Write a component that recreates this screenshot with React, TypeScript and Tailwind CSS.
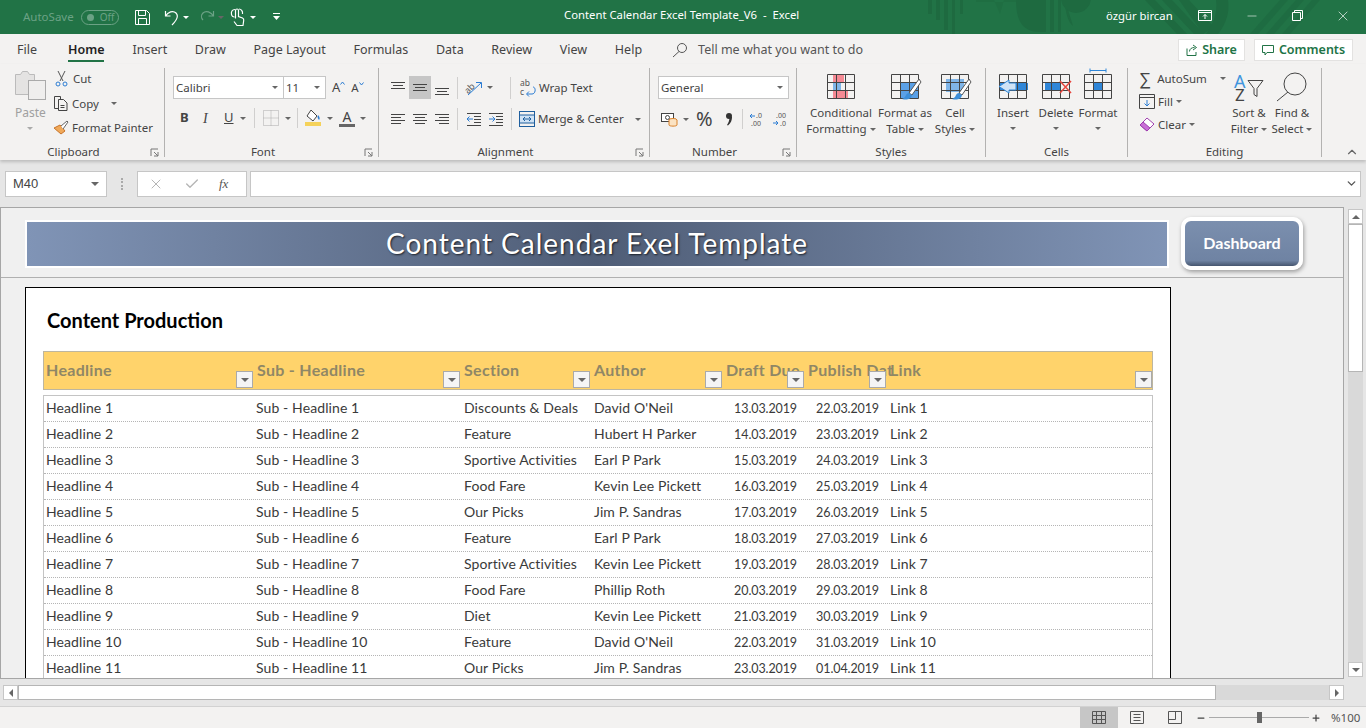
import type { ReactNode } from "react";
import { ChevronDown, ChevronUp, X, Check, Minus, Plus } from "lucide-react";

const rows = [
  ["Headline 1", "Sub - Headline 1", "Discounts & Deals", "David O'Neil", "13.03.2019", "22.03.2019", "Link 1"],
  ["Headline 2", "Sub - Headline 2", "Feature", "Hubert H Parker", "14.03.2019", "23.03.2019", "Link 2"],
  ["Headline 3", "Sub - Headline 3", "Sportive Activities", "Earl P Park", "15.03.2019", "24.03.2019", "Link 3"],
  ["Headline 4", "Sub - Headline 4", "Food Fare", "Kevin Lee Pickett", "16.03.2019", "25.03.2019", "Link 4"],
  ["Headline 5", "Sub - Headline 5", "Our Picks", "Jim P. Sandras", "17.03.2019", "26.03.2019", "Link 5"],
  ["Headline 6", "Sub - Headline 6", "Feature", "Earl P Park", "18.03.2019", "27.03.2019", "Link 6"],
  ["Headline 7", "Sub - Headline 7", "Sportive Activities", "Kevin Lee Pickett", "19.03.2019", "28.03.2019", "Link 7"],
  ["Headline 8", "Sub - Headline 8", "Food Fare", "Phillip Roth", "20.03.2019", "29.03.2019", "Link 8"],
  ["Headline 9", "Sub - Headline 9", "Diet", "Kevin Lee Pickett", "21.03.2019", "30.03.2019", "Link 9"],
  ["Headline 10", "Sub - Headline 10", "Feature", "David O'Neil", "22.03.2019", "31.03.2019", "Link 10"],
  ["Headline 11", "Sub - Headline 11", "Our Picks", "Jim P. Sandras", "23.03.2019", "01.04.2019", "Link 11"],
];

const tabs = ["Insert", "Draw", "Page Layout", "Formulas", "Data", "Review", "View", "Help"];
const sheetCols = "grid grid-cols-[211px_207px_130px_132px_82px_82px_1fr]";

function Caret({ className = "" }: { className?: string }) {
  return <span className={`inline-block w-0 h-0 border-x-[3px] border-x-transparent border-t-[3px] border-t-[#666] ${className}`} />;
}

function Sep({ className = "h-[24px]" }: { className?: string }) {
  return <span className={`w-px bg-[#d0cfce] ${className}`} />;
}

function Group({ width, label, launcher, children }: { width: string; label: string; launcher?: boolean; children: ReactNode }) {
  return (
    <div className={`${width} shrink-0 flex flex-col border-r border-[#b3b2b1] my-[4px] h-[89px]`}>
      <div className="flex-1 relative flex">{children}</div>
      <div className={`h-[10px] relative text-center text-[11.5px] leading-[10px] text-[#444] ${launcher ? "pr-[17px]" : ""}`}>
        {label}
        {launcher && (
          <svg className="absolute right-[5px] top-[1px]" width="9" height="9" viewBox="0 0 9 9" fill="none" stroke="#777">
            <path d="M1 8V1h7M8 8H4M8 8V4M8 8L4 4" />
          </svg>
        )}
      </div>
    </div>
  );
}

// align-lines icon: each line is [x1, x2, y]
function Lines({ lines, arrow }: { lines: number[][]; arrow?: ReactNode }) {
  return (
    <svg width="16" height="16" viewBox="0 0 16 16" fill="none" stroke="#444">
      {lines.map((l, i) => (
        <path key={i} d={`M${l[0]} ${l[2]}.5H${l[1]}`} />
      ))}
      {arrow}
    </svg>
  );
}

function GridIcon({ fill, children }: { fill?: ReactNode; children?: ReactNode }) {
  return (
    <svg className="overflow-visible" width="30" height="32" viewBox="0 0 30 32" fill="none">
      {fill}
      <path d="M1.500 6.500h27v24h-27zM1.500 14.500h27M1.500 22.500h27M10.500 6.500v24M19.500 6.500v24" stroke="#444" />
      {children}
    </svg>
  );
}

const Brush = () => (
  <g>
    <path d="M29 11L19 25l3 2L31 14z" fill="#fff" stroke="#555" />
    <path d="M19 25c-3 0-3 3-4 4-1 1-3 2-3 2 4 1 9 1 10-4z" fill="#3d8ed8" />
  </g>
);

function BigBtn({ icon, lines, className = "" }: { icon: ReactNode; lines: ReactNode[]; className?: string }) {
  return (
    <div className={`flex flex-col items-center shrink-0 text-[11.5px] leading-[16px] text-[#444] ${className}`}>
      <div className="h-[37px] flex items-start">{icon}</div>
      {lines.map((l, i) => (
        <div key={i} className="whitespace-nowrap flex items-center gap-[3px]">{l}</div>
      ))}
    </div>
  );
}

function FilterBtn({ className }: { className: string }) {
  return (
    <span className={`absolute bottom-[1px] z-10 w-[17px] h-[17px] bg-[#f5f5f5] border border-[#aaa] flex items-center justify-center ${className}`}>
      <Caret className="border-x-[4px] border-t-[4px]" />
    </span>
  );
}

function TitleBar() {
  return (
    <div className="relative h-[34px] bg-[#217346] flex items-center text-white overflow-hidden shrink-0">
      <svg className="absolute left-[900px] top-0" width="466" height="34" viewBox="0 0 466 34" fill="#1e6a40">
        <path d="M28 0h4v14h-4zM36 0h4v20h-4zM44 0h4v30h-4zM52 0h3v34h-3zM60 0h3v14h-3z" />
        <path d="M94 0l6 14 4-14zM76 0h40v2H76z" opacity=".6" />
        <path d="M116 0c0 20 6 32 24 32h6V0z" />
        <path d="M150 0h4v32h-4zM158 0h3v32h-3zM165 0c0 12 3 22 8 26z" />
        <circle cx="176" cy="-2" r="15" />
        <path d="M245 0h10l32 34h-10zM262 0h10l32 34h-10zM279 0h10l24 26c-3 3-6 6-10 8z" />
        <path d="M316 0h12c2 12-2 24-10 34h-12c7-9 12-22 10-34z" />
        <path d="M380 0h8l-30 34h-8zM396 0h8l-30 34h-8zM412 0h8l-30 34h-8z" opacity=".7" />
      </svg>
      <span className="relative ml-[23px] text-[11.5px] text-[#6ba285]">AutoSave</span>
      <span className="relative ml-[7px] w-[38px] h-[15px] rounded-full border border-[#6ba285] flex items-center pl-[5px] gap-[6px]">
        <span className="w-[7px] h-[7px] rounded-full bg-[#6ba285]" />
        <span className="text-[10px] leading-none text-[#6ba285]">Off</span>
      </span>
      <svg className="relative ml-[15px]" width="17" height="17" viewBox="0 0 17 17" fill="none" stroke="#fff">
        <path d="M1.500 1.500h11l3 3v11h-14zM4.500 1.500v5h7v-5M4.500 15.500v-6h8v6" />
      </svg>
      <svg className="relative ml-[13px]" width="16" height="17" viewBox="0 0 16 17" fill="none" stroke="#fff" strokeWidth="1.2">
        <path d="M1.500 2v5h5M1.500 7C4 3 9 1 12 4c3 3 1 7-4 12" />
      </svg>
      <Caret className="relative ml-[3px] border-t-white" />
      <svg className="relative ml-[10px]" width="16" height="17" viewBox="0 0 16 17" fill="none" stroke="#6ba285" strokeWidth="1.2">
        <path d="M14.500 2v5h-5M14.500 7C12 3 7 1 4 4 2 6 2 9 4 11" />
      </svg>
      <Caret className="relative ml-[3px] border-t-[#6ba285]" />
      <svg className="relative ml-[6px]" width="15" height="20" viewBox="0 0 15 20" fill="none" stroke="#fff" strokeWidth="1.2">
        <path d="M5.500 11.500v-8a1.500 1.500 0 013 0v6l4 1.500c1 .5 1.500 1 1.200 2.500L13 18.500H7L4 14.500M5 2.500C2 2.500 1 5 1.500 7.500c.3 1.500 1.500 2.500 3 2.500M9 2c2 0 4 2 3.500 5" />
      </svg>
      <Caret className="relative ml-[5px] border-t-white" />
      <svg className="relative ml-[17px]" width="7" height="8" viewBox="0 0 7 8" fill="#fff">
        <path d="M0 0h7v1H0zM0 3h7L3.500 7z" />
      </svg>
      <span className="absolute left-[564px] top-[7px] text-[11.3px] leading-[16px] whitespace-pre">Content Calendar Excel Template_V6  -  Excel</span>
      <span className="absolute left-[1106px] top-[8px] text-[11.3px] leading-[16px]">özgür bircan</span>
      <svg className="absolute left-[1198px] top-[10px]" width="14" height="12" viewBox="0 0 14 12" fill="none" stroke="#fff">
        <path d="M.5 .5h13v10H.5zM.5 2.500h13M7 9V4.500M5 6.500l2-2 2 2" />
      </svg>
      <Minus className="absolute left-[1245px] top-[9px]" size={14} strokeWidth={1} />
      <svg className="absolute left-[1292px] top-[10px]" width="11" height="11" viewBox="0 0 11 11" fill="none" stroke="#fff">
        <path d="M.5 2.500h8v8h-8zM2.500 2.500v-2h8v8h-2" />
      </svg>
      <X className="absolute left-[1335px] top-[8px]" size={16} strokeWidth={1} />
    </div>
  );
}

function TabRow() {
  return (
    <div className="h-[30px] flex items-center bg-[#f3f2f1] shrink-0 text-[12.5px] text-[#444] pl-[17px] pt-[2px]">
      <span className="mr-[31px]">File</span>
      <span className="relative font-semibold text-[#1f1f1f] mr-[28px] leading-[30px]">
        Home
        <span className="absolute left-0 right-0 bottom-[3px] h-[2px] bg-[#217346]" />
      </span>
      <div className="flex gap-[27.7px]">
        {tabs.map((t) => (
          <span key={t}>{t}</span>
        ))}
      </div>
      <svg className="ml-[30px]" width="16" height="16" viewBox="0 0 16 16" fill="none" stroke="#555">
        <circle cx="10" cy="6" r="4.500" />
        <path d="M7 9.500L1 15" />
      </svg>
      <span className="ml-[10px] text-[#555]">Tell me what you want to do</span>
      <div className="ml-auto mr-[13px] flex gap-[9px] text-[#217346] font-semibold">
        <span className="w-[67px] h-[22px] bg-white border border-[#e3e2e1] flex items-center justify-center gap-[4px]">
          <svg width="12" height="12" viewBox="0 0 12 12" fill="none" stroke="#217346"><path d="M1 4.500v7h9V8M3.500 7.500c0-2.500 2-4 5-4M7 1l3.500 2.500L7 6" /></svg>
          Share
        </span>
        <span className="w-[99px] h-[22px] bg-white border border-[#e3e2e1] flex items-center justify-center gap-[5px]">
          <svg width="12" height="12" viewBox="0 0 12 12" fill="none" stroke="#217346"><path d="M.5 1.500h11v7H5L3 11V8.500H.5z" /></svg>
          Comments
        </span>
      </div>
    </div>
  );
}

function Clipboard() {
  return (
    <Group width="w-[165px]" label="Clipboard" launcher>
      <div className="w-[54px] pl-[15px] pt-[1px] flex flex-col items-start text-[#a0a0a0] text-[12px] leading-[14px]">
        <svg width="31" height="32" viewBox="0 0 31 32" fill="none">
          <path d="M.5 5.500h5l2-3h5l2 3h5v20H.5z" fill="#e4e3e2" stroke="#bbb" />
          <rect x="13.500" y="11.500" width="17" height="19" fill="#efeeed" stroke="#aaa" />
        </svg>
        <span className="mt-[5px]">Paste</span>
        <Caret className="ml-[12px] mt-[7px] border-t-[#aaa]" />
      </div>
      <div className="flex flex-col text-[11.5px] text-[#444] pt-[2px] gap-[7.5px] leading-[17px]">
        <div className="flex items-center gap-[5px] pl-[1px]">
          <svg width="13" height="16" viewBox="0 0 13 16" fill="none" stroke="#555">
            <path d="M3 0l5 10M10 0L5 10" />
            <circle cx="3" cy="13" r="2" stroke="#2b7cd3" />
            <circle cx="10" cy="13" r="2" stroke="#2b7cd3" />
          </svg>
          <span>Cut</span>
        </div>
        <div className="flex items-center gap-[4px]">
          <svg width="14" height="15" viewBox="0 0 14 15" fill="none" stroke="#444">
            <path d="M4 12.500H.5v-12h6v3M4.500 3.500h5l3.500 3.500v7.500H4.500zM6.500 9.500h4M6.500 11.500h4" />
          </svg>
          <span>Copy</span>
          <Caret className="ml-[8px]" />
        </div>
        <div className="flex items-center gap-[3px] -ml-[1px]">
          <svg width="16" height="15" viewBox="0 0 16 15" fill="none">
            <path d="M1 8l6-3 5 6-4 3z" fill="#f0a95a" stroke="#c8742a" />
            <path d="M8 6l6-5 1 1-5 7" fill="#fff" stroke="#666" />
          </svg>
          <span>Format Painter</span>
        </div>
      </div>
    </Group>
  );
}

function SelectBox({ className, text }: { className: string; text: string }) {
  return (
    <div className={`h-[23px] bg-white border border-[#c6c6c6] flex items-center justify-between pl-[2px] pr-[5px] text-[11.5px] text-[#444] ${className}`}>
      <span>{text}</span>
      <Caret />
    </div>
  );
}

function Font() {
  return (
    <Group width="w-[214px]" label="Font" launcher>
      <div className="flex flex-col pl-[8px] pt-[8px]">
        <div className="flex items-center">
          <SelectBox className="w-[111px]" text="Calibri" />
          <SelectBox className="w-[43px] -ml-px" text="11" />
          <span className="ml-[6px] flex items-start text-[#444]">
            <span className="text-[13px] leading-none">A</span>
            <svg width="5" height="4" viewBox="0 0 5 4" fill="none" stroke="#2b7cd3"><path d="M.5 3.500l2-2.500 2 2.500" /></svg>
          </span>
          <span className="ml-[6px] flex items-start text-[#444]">
            <span className="text-[11.5px] leading-none">A</span>
            <svg width="5" height="4" viewBox="0 0 5 4" fill="none" stroke="#2b7cd3"><path d="M.5 .5l2 2.500 2-2.500" /></svg>
          </span>
        </div>
        <div className="flex items-center mt-[7px] h-[24px] text-[#444]">
          <span className="ml-[7px] w-[22px] font-bold text-[13px]">B</span>
          <span className="w-[22px] italic text-[14px] pl-[1px] font-['Liberation_Serif',serif]">I</span>
          <span className="w-[16px] underline text-[13px]">U</span>
          <Caret />
          <Sep className="ml-[8px] h-[20px]" />
          <svg className="ml-[8px]" width="16" height="16" viewBox="0 0 16 16" fill="none" stroke="#aaa" strokeDasharray="1 1">
            <path d="M.5 .5h15v15H.5zM8 .5v15M.5 8h15" />
          </svg>
          <Caret className="ml-[6px]" />
          <Sep className="ml-[6px] h-[20px]" />
          <svg className="ml-[7px]" width="17" height="18" viewBox="0 0 17 18" fill="none">
            <path d="M6 1l6 6-4 5-6-5z" stroke="#444" fill="#fff" />
            <path d="M13 6c2 2 2 4 1 5-1-1-2-3-1-5z" fill="#2b7cd3" />
            <rect x="0" y="13" width="16" height="4" fill="#f5d25a" />
          </svg>
          <Caret className="ml-[5px]" />
          <span className="ml-[6px] w-[16px] flex flex-col items-center text-[14px] leading-[14px]">
            A
            <span className="w-[16px] h-[3px] bg-[#666]" />
          </span>
          <Caret className="ml-[5px]" />
        </div>
      </div>
    </Group>
  );
}

function Alignment() {
  return (
    <Group width="w-[271px]" label="Alignment" launcher>
      <div className="flex flex-col pl-[11px] pt-[8px]">
        <div className="flex items-center h-[23px]">
          <Lines lines={[[1, 15, 2], [3, 13, 5], [1, 15, 8]]} />
          <span className="ml-[3px] w-[22px] h-[23px] bg-[#c6c6c6] flex items-center justify-center">
            <Lines lines={[[1, 15, 4], [3, 13, 7], [1, 15, 10]]} />
          </span>
          <span className="ml-[3px]"><Lines lines={[[1, 15, 8], [3, 13, 11], [1, 15, 14]]} /></span>
          <Sep className="ml-[7px] h-[22px]" />
          <svg className="ml-[7px] overflow-visible" width="18" height="18" viewBox="0 0 18 18" fill="none">
            <text x="-1" y="12" fontSize="9" fill="#555" transform="rotate(-45 5 9)" fontFamily="Noto Sans">ab</text>
            <path d="M3 16L16 4M11 3.500h5.500V9" stroke="#2b7cd3" />
          </svg>
          <Caret className="ml-[4px]" />
          <Sep className="ml-[17px] h-[22px]" />
          <div className="ml-[9px] flex items-center gap-[2px] text-[11.5px] text-[#444]">
            <svg className="overflow-visible" width="17" height="18" viewBox="0 0 17 18" fill="none">
              <text x="0" y="7" fontSize="8.500" fill="#555" fontFamily="Noto Sans">ab</text>
              <text x="0" y="16" fontSize="8.500" fill="#555" fontFamily="Noto Sans">c</text>
              <path d="M13 8c3 0 3 7-1 7H7M9 12.500L6.500 15 9 17.500" stroke="#2b7cd3" />
            </svg>
            <span>Wrap Text</span>
          </div>
        </div>
        <div className="flex items-center h-[24px] mt-[8px]">
          <Lines lines={[[1, 15, 3], [1, 11, 6], [1, 15, 9], [1, 11, 12]]} />
          <span className="ml-[6px]"><Lines lines={[[1, 15, 3], [3, 13, 6], [1, 15, 9], [3, 13, 12]]} /></span>
          <span className="ml-[6px]"><Lines lines={[[1, 15, 3], [5, 15, 6], [1, 15, 9], [5, 15, 12]]} /></span>
          <Sep className="ml-[7px] h-[22px]" />
          <span className="ml-[8px]">
            <Lines lines={[[1, 15, 2], [8, 15, 5], [8, 15, 8], [8, 15, 11], [1, 15, 14]]} arrow={<path d="M7 8H1M3.500 5.500L1 8l2.500 2.500" stroke="#2b7cd3" />} />
          </span>
          <span className="ml-[6px]">
            <Lines lines={[[1, 15, 2], [8, 15, 5], [8, 15, 8], [8, 15, 11], [1, 15, 14]]} arrow={<path d="M1 8h6M4.500 5.500L7 8l-2.500 2.500" stroke="#2b7cd3" />} />
          </span>
          <Sep className="ml-[7px] h-[22px]" />
          <div className="ml-[7px] flex items-center gap-[3px] text-[11.5px] text-[#444]">
            <svg width="16" height="16" viewBox="0 0 16 16" fill="none">
              <rect x=".5" y=".5" width="15" height="15" stroke="#1f5f9e" />
              <rect x="1" y="4" width="14" height="8" fill="#cfe3f6" />
              <path d="M.5 4h15M.5 12h15M4 8h8M6 6L4 8l2 2M10 6l2 2-2 2" stroke="#1f5f9e" />
            </svg>
            <span>Merge &amp; Center</span>
            <Caret className="ml-[8px]" />
          </div>
        </div>
      </div>
    </Group>
  );
}

function NumberGroup() {
  return (
    <Group width="w-[147px]" label="Number" launcher>
      <div className="flex flex-col pl-[8px] pt-[8px]">
        <SelectBox className="w-[131px]" text="General" />
        <div className="flex items-center h-[24px] mt-[8px]">
          <svg className="ml-[3px]" width="17" height="16" viewBox="0 0 17 16" fill="none">
            <rect x=".5" y="2.500" width="12" height="8" fill="#fff" stroke="#444" />
            <circle cx="6.500" cy="6.500" r="2" stroke="#444" />
            <ellipse cx="12" cy="9" rx="4" ry="1.500" fill="#fbe3c3" stroke="#d9822b" />
            <path d="M8 9v5c0 1.500 8 1.500 8 0V9" fill="#fbe3c3" stroke="#d9822b" />
          </svg>
          <Caret className="ml-[5px]" />
          <span className="ml-[7px] text-[20px] leading-none text-[#444]">%</span>
          <svg className="ml-[13px]" width="6" height="13" viewBox="0 0 6 13" fill="#333">
            <circle cx="3" cy="3" r="3" />
            <path d="M3.500 4h2.500c0 3-1 6-4 8.500L1 12c1.500-2 2.500-5 2.500-8z" />
          </svg>
          <Sep className="ml-[10px] h-[20px]" />
          <svg className="ml-[6px]" width="15" height="16" viewBox="0 0 15 16" fill="none">
            <path d="M6 5H1M3 3L1 5l2 2" stroke="#2b7cd3" />
            <text x="7" y="7" fontSize="7" fill="#555" fontFamily="Noto Sans">.0</text>
            <text x="2" y="15" fontSize="7" fill="#555" fontFamily="Noto Sans">.00</text>
          </svg>
          <svg className="ml-[8px]" width="15" height="16" viewBox="0 0 15 16" fill="none">
            <text x="4" y="7" fontSize="7" fill="#555" fontFamily="Noto Sans">.00</text>
            <path d="M1 12h5M4 10l2 2-2 2" stroke="#2b7cd3" />
            <text x="8" y="15" fontSize="7" fill="#555" fontFamily="Noto Sans">.0</text>
          </svg>
        </div>
      </div>
    </Group>
  );
}

function Styles() {
  return (
    <Group width="w-[189px]" label="Styles">
      <div className="flex pl-[9px]">
        <BigBtn
          className="w-[70px]"
          icon={
            <GridIcon
              fill={
                <>
                  <rect x="7" y="7" width="11" height="8" fill="#f58a94" />
                  <rect x="7" y="15" width="8" height="8" fill="#7fb5e8" />
                  <rect x="7" y="23" width="15" height="7" fill="#f58a94" />
                </>
              }
            />
          }
          lines={["Conditional", <>Formatting<Caret /></>]}
        />
        <BigBtn
          className="w-[58px]"
          icon={<GridIcon fill={<rect x="10" y="14" width="18" height="16" fill="#5aa0e6" />}><Brush /></GridIcon>}
          lines={["Format as", <>Table<Caret /></>]}
        />
        <BigBtn
          className="w-[42px]"
          icon={<GridIcon fill={<rect x="6" y="11" width="18" height="13" fill="#7fb5e8" />}><Brush /></GridIcon>}
          lines={["Cell", <>Styles<Caret /></>]}
        />
      </div>
    </Group>
  );
}

function Cells() {
  return (
    <Group width="w-[142px]" label="Cells">
      <div className="flex pl-[12px]">
        <BigBtn
          className="w-[30px]"
          icon={
            <GridIcon fill={<rect x="2" y="15" width="28" height="7" fill="#2f86d8" />}>
              <path d="M11 12l-10 6.500 10 6.500v-3h7v-7h-7z" fill="#cfe3f6" stroke="#2f86d8" />
            </GridIcon>
          }
          lines={["Insert", <Caret className="mt-[6px]" />]}
        />
        <BigBtn
          className="w-[30px] ml-[13px]"
          icon={
            <GridIcon fill={<rect x="4" y="15" width="16" height="7" fill="#2f86d8" />}>
              <path d="M19 13l11 12M30 13L19 25" stroke="#e8473f" strokeWidth="1.500" />
            </GridIcon>
          }
          lines={["Delete", <Caret className="mt-[6px]" />]}
        />
        <BigBtn
          className="w-[30px] ml-[12px]"
          icon={
            <GridIcon fill={<rect x="10" y="15" width="10" height="7" fill="#2f86d8" />}>
              <path d="M7 2.500h16M7 .5v4M23 .5v4" stroke="#2f86d8" />
            </GridIcon>
          }
          lines={["Format", <Caret className="mt-[6px]" />]}
        />
      </div>
    </Group>
  );
}

function Editing() {
  return (
    <Group width="w-[194px]" label="Editing">
      <div className="flex flex-col pl-[11px] pt-[2px] text-[11.5px] leading-[17px] text-[#444] w-[97px] shrink-0 gap-[6px]">
        <div className="flex items-center gap-[6px]">
          <span className="w-[15px] text-[17px] leading-none font-light">∑</span>
          <span>AutoSum</span>
          <Caret className="ml-[7px]" />
        </div>
        <div className="flex items-center gap-[3px]">
          <svg width="16" height="15" viewBox="0 0 16 15" fill="none">
            <path d="M.5 .5h15v14H.5zM.5 3.500h15" stroke="#444" />
            <path d="M8 6v6M5.500 9.500L8 12l2.500-2.500" stroke="#2b7cd3" />
          </svg>
          <span>Fill</span>
          <Caret />
        </div>
        <div className="flex items-center gap-[3px]">
          <svg width="16" height="15" viewBox="0 0 16 15" fill="none">
            <path d="M1 8l7-7 7 6-7 7z" fill="#fff" stroke="#a03fb0" />
            <path d="M1 8l3-3 7 6-3 3z" fill="#c86fd6" stroke="#a03fb0" />
          </svg>
          <span>Clear</span>
          <Caret />
        </div>
      </div>
      <BigBtn
        className="w-[48px]"
        icon={
          <svg width="32" height="34" viewBox="0 0 32 34" fill="none">
            <text x="1" y="20" fontSize="18" fill="#3f95dd" fontFamily="Noto Sans">A</text>
            <text x="2" y="33" fontSize="17" fill="#444" fontFamily="Noto Sans">Z</text>
            <path d="M15 12.500h15l-6 8v8l-3-2v-6z" stroke="#444" />
          </svg>
        }
        lines={["Sort &", <>Filter<Caret /></>]}
      />
      <BigBtn
        className="w-[38px]"
        icon={
          <svg width="32" height="34" viewBox="0 0 32 34" fill="none" stroke="#444">
            <circle cx="19" cy="16" r="11" />
            <path d="M12 24L1 33" />
          </svg>
        }
        lines={["Find &", <>Select<Caret /></>]}
      />
    </Group>
  );
}

function Ribbon() {
  return (
    <div className="relative z-10 h-[96px] flex bg-[#f3f2f1] shrink-0 shadow-[0_2px_3px_rgba(0,0,0,0.18)]">
      <Clipboard />
      <Font />
      <Alignment />
      <NumberGroup />
      <Styles />
      <Cells />
      <Editing />
      <ChevronUp className="absolute left-[1345px] top-[81px] text-[#666]" size={14} strokeWidth={2} />
    </div>
  );
}

function FormulaBar() {
  return (
    <div className="h-[47px] bg-[#e6e6e6] flex items-center pl-[5px] pr-[5px] shrink-0">
      <div className="w-[102px] h-[26px] bg-white border border-[#c6c6c6] flex items-center justify-between pl-[7px] pr-[7px] text-[13px] text-[#444] font-['Liberation_Sans',sans-serif]">
        M40
        <Caret className="border-x-[4px] border-t-[4px]" />
      </div>
      <span className="ml-[14px] w-[2px] h-[12px] border-l-2 border-dotted border-[#aaa]" />
      <div className="ml-[14px] w-[110px] h-[26px] bg-white border border-[#c6c6c6] flex items-center text-[#b5b5b5]">
        <X className="ml-[10px]" size={16} strokeWidth={1.5} />
        <Check className="ml-[20px]" size={16} strokeWidth={2} />
        <span className="ml-[19px] italic text-[#555] text-[13px] font-['Liberation_Serif',serif]">fx</span>
      </div>
      <div className="ml-[3px] flex-1 h-[26px] bg-white border border-[#c6c6c6] flex items-center justify-end pr-[2px]">
        <ChevronDown className="text-[#555]" size={13} strokeWidth={2.5} />
      </div>
    </div>
  );
}

function Sheet() {
  return (
    <div className="w-[1344px] h-[472px] overflow-hidden bg-[#f0f0f0] border border-[#a6a6a6] font-['Lato',sans-serif]">
      <div className="h-[70px] border-b border-[#b0b0b0] flex items-start">
        <div className="ml-[24px] mt-[12px] w-[1144px] h-[48px] border-2 border-white bg-[linear-gradient(90deg,#8094b6_0%,#4f5d76_50%,#8094b6_100%)] text-center text-white text-[28px] leading-[42px] tracking-[1px] [text-shadow:1px_1px_2px_rgba(0,0,0,0.7)]">
          Content Calendar Exel Template
        </div>
        <div className="ml-[12px] mt-[9px] w-[122px] h-[53px] rounded-[10px] border-[4px] border-white bg-[linear-gradient(180deg,#7b8fae_0%,#6f83a3_88%,#46566f_100%)] shadow-[1px_2px_4px_rgba(0,0,0,0.35)] text-center text-white font-bold text-[16px] leading-[44px]">
          Dashboard
        </div>
      </div>
      <div className="ml-[24px] mt-[9px] w-[1146px] border border-black bg-white pl-[17px] pr-[17px] pt-[18px] h-[500px]">
        <div className="text-[20px] leading-[28px] font-bold text-black pl-[4px]">Content Production</div>
        <div className={`${sheetCols} mt-[17px] h-[39px] bg-[#ffd36b] border border-[#bdb6a0] text-[16px] font-bold text-[#8f8766] tracking-[0.3px]`}>
          {["Headline", "Sub - Headline", "Section", "Author", "Draft Due", "Publish Dat", "Link"].map((h) => (
            <div key={h} className="relative pl-[2px] leading-[35px] whitespace-nowrap overflow-visible">
              {h}
              <FilterBtn className={h === "Link" ? "right-0" : "right-[2px]"} />
            </div>
          ))}
        </div>
        <div className="mt-[5px] border border-[#c4c4c4] text-[14px] text-[#3a3a3a] tracking-[0.1px]">
          {rows.map((r) => (
            <div key={r[0]} className={`${sheetCols} h-[26px] leading-[24px] border-b border-dotted border-[#b5b5b5]`}>
              <div className="pl-[2px]">{r[0]}</div>
              <div className="pl-[1px]">{r[1]}</div>
              <div className="pl-[2px]">{r[2]}</div>
              <div className="pl-[2px]">{r[3]}</div>
              <div className="text-right pr-[9px] text-[12.5px] tracking-[-0.1px] leading-[26px]">{r[4]}</div>
              <div className="text-right pr-[9px] text-[12.5px] tracking-[-0.1px] leading-[26px]">{r[5]}</div>
              <div className="pl-[2px]">{r[6]}</div>
            </div>
          ))}
        </div>
      </div>
    </div>
  );
}

function ScrollBtn({ dir }: { dir: "up" | "down" | "left" | "right" }) {
  const arrow = {
    up: "border-x-[4px] border-x-transparent border-b-[4px] border-b-[#666]",
    down: "border-x-[4px] border-x-transparent border-t-[4px] border-t-[#666]",
    left: "border-y-[4px] border-y-transparent border-r-[4px] border-r-[#666]",
    right: "border-y-[4px] border-y-transparent border-l-[4px] border-l-[#666]",
  }[dir];
  return (
    <span className="w-[15px] h-[15px] shrink-0 bg-white border border-[#c6c6c6] flex items-center justify-center">
      <span className={`w-0 h-0 ${arrow}`} />
    </span>
  );
}

function VScroll() {
  return (
    <div className="w-[22px] h-[472px] bg-[#e6e6e6] pl-[4px] pr-[3px] pt-[2px] pb-[2px] flex flex-col">
      <ScrollBtn dir="up" />
      <div className="flex-1 bg-[#d9d9d9] flex flex-col">
        <div className="h-[148px] bg-white border border-[#b5b5b5]" />
      </div>
      <ScrollBtn dir="down" />
    </div>
  );
}

function HScroll() {
  return (
    <div className="h-[27px] bg-[#e6e6e6] flex items-start pt-[6px] pl-[3px] shrink-0">
      <ScrollBtn dir="left" />
      <div className="w-[1311px] h-[15px] bg-[#d9d9d9] flex">
        <div className="w-[1198px] bg-white border border-[#b5b5b5]" />
      </div>
      <ScrollBtn dir="right" />
    </div>
  );
}

function StatusBar() {
  return (
    <div className="flex-1 bg-[#f3f2f1] border-t border-[#d2d2d2] flex items-stretch pl-[1080px] text-[#555]">
      <span className="w-[38px] bg-[#c6c6c6] flex items-center justify-center">
        <svg width="14" height="13" viewBox="0 0 14 13" fill="none" stroke="#555">
          <path d="M.5 .5h13v12H.5zM.5 4.500h13M.5 8.500h13M4.500 .5v12M9.500 .5v12" />
        </svg>
      </span>
      <span className="w-[38px] flex items-center justify-center">
        <svg width="14" height="13" viewBox="0 0 14 13" fill="none" stroke="#555">
          <path d="M.5 .5h13v12H.5zM3.500 3.500h7M3.500 6.500h7M3.500 9.500h7" />
        </svg>
      </span>
      <span className="w-[38px] flex items-center justify-center">
        <svg width="14" height="13" viewBox="0 0 14 13" fill="none" stroke="#555">
          <path d="M.5 .5h13v12H.5zM.5 8.500h7v-8" />
        </svg>
      </span>
      <Minus className="ml-[2px] self-center text-[#444]" size={10} strokeWidth={3} />
      <span className="relative ml-[3px] w-[100px] self-center h-px bg-[#aaa]">
        <span className="absolute left-[48px] -top-[5px] w-[5px] h-[11px] bg-[#666]" />
      </span>
      <Plus className="ml-[2px] self-center text-[#444]" size={10} strokeWidth={3} />
      <span className="ml-[10px] self-center text-[11.5px]">%100</span>
    </div>
  );
}

export default function App() {
  return (
    <div className="w-[1366px] h-[728px] overflow-hidden flex flex-col bg-[#e6e6e6] font-['Noto_Sans',sans-serif]">
      <TitleBar />
      <TabRow />
      <Ribbon />
      <FormulaBar />
      <div className="flex shrink-0">
        <Sheet />
        <VScroll />
      </div>
      <HScroll />
      <StatusBar />
    </div>
  );
}
